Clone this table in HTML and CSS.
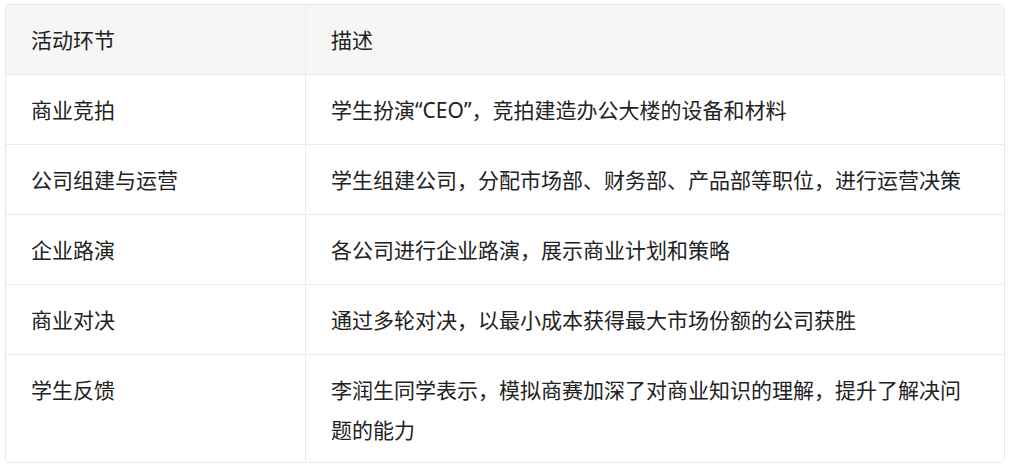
FILE: index.html
```html
<!DOCTYPE html>
<html lang="zh-CN">
<head>
<meta charset="utf-8">
<link rel="stylesheet" href="styles.css">
</head>
<body>
<div class="wrap">
<table class="tbl">
<thead>
<tr><th class="c1">活动环节</th><th>描述</th></tr>
</thead>
<tbody>
<tr><td class="c1">商业竞拍</td><td>学生扮演“CEO”，竞拍建造办公大楼的设备和材料</td></tr>
<tr><td class="c1">公司组建与运营</td><td>学生组建公司，分配市场部、财务部、产品部等职位，进行运营决策</td></tr>
<tr><td class="c1">企业路演</td><td>各公司进行企业路演，展示商业计划和策略</td></tr>
<tr><td class="c1">商业对决</td><td>通过多轮对决，以最小成本获得最大市场份额的公司获胜</td></tr>
<tr><td class="c1">学生反馈</td><td class="last">李润生同学表示，模拟商赛加深了对商业知识的理解，提升了解决问题的能力</td></tr>
</tbody>
</table>
</div>
</body>
</html>
```
FILE: styles.css
```css
html, body {
  margin: 0;
  padding: 0;
  background: #fff;
}
body {
  padding: 4px 0 0 5px;
  font-family: "Noto Sans", "Noto Sans CJK SC", sans-serif;
  color: #222;
}
.wrap {
  width: 998px;
  border: 1px solid #e8e8e8;
  border-radius: 5px;
  overflow: hidden;
  box-shadow: 0 0 2px rgba(0,0,0,0.04);
}
.tbl {
  width: 100%;
  border-collapse: collapse;
  font-size: 21px;
  line-height: 40px;
}
.tbl th, .tbl td {
  text-align: left;
  font-weight: normal;
  padding: 14.5px 25px 14.5px 25px;
  border-top: 1px solid #ebebeb;
  border-left: 1px solid #ebebeb;
  vertical-align: top;
}
.tbl thead th {
  border-top: none;
  background: #f6f6f6;
}
.tbl .c1 {
  border-left: none;
  width: 249px;
}
.tbl tbody tr:last-child td {
  padding-bottom: 12px;
}
```
